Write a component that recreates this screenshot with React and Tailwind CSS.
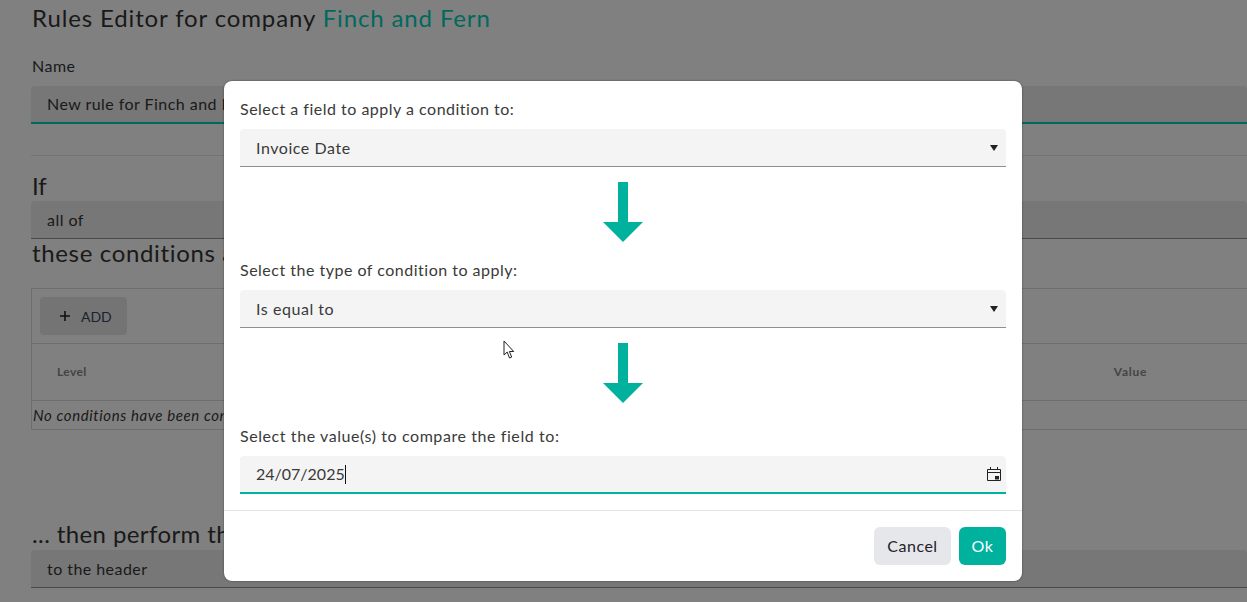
const font = '"Lato","Noto Sans",sans-serif';

function Arrow() {
  return (
    <div className="flex justify-center h-[60px]">
      <svg width="40" height="60" viewBox="0 0 40 60">
        <path d="M15 0h10v40h15L20 60 0 40h15z" fill="#00b19d" />
      </svg>
    </div>
  );
}

function ModalSelect({ label }) {
  return (
    <div className="h-[38px] bg-[#f4f4f4] rounded-t-[4px] border-b border-[#8f8f8f] flex items-center justify-between pl-4 pr-[8px] text-[16px] text-[#3a3a3a]">
      <span className="tracking-[0.55px]">{label}</span>
      <svg width="8" height="6" viewBox="0 0 8 6"><path d="M0 0h8L4 6z" fill="#222" /></svg>
    </div>
  );
}

function Field({ label, className }) {
  return (
    <div className={`flex items-center bg-[#777777] rounded-t-[4px] pl-4 text-[16px] text-[#191919] tracking-[0.45px] ${className}`}>
      {label}
    </div>
  );
}

export default function App() {
  return (
    <div className="relative w-[1247px] h-[602px] overflow-hidden bg-[#808080] text-[#191919]" style={{ fontFamily: font }}>
      <div className="pl-[31px]">
        <h1 className="pl-px text-[24px] leading-[35px] tracking-[0.87px] text-[#191919]">
          Rules Editor for company <span className="text-[#00695e]">Finch and Fern</span>
        </h1>
        <div className="pl-px mt-[19px] text-[16px] leading-[24px] tracking-[0.5px]">Name</div>
        <Field label="New rule for Finch and Fern" className="mt-[8px] h-[38px] border-b-2 border-[#00695e]" />
        <div className="mt-[31px] border-t border-[#747474]" />
        <div className="pl-px mt-[15px] text-[24px] leading-[30px]">If</div>
        <Field label="all of" className="h-[38px] border-b border-[#4a4a4a]" />
        <div className="pl-px text-[24px] leading-[28px] tracking-[0.65px]">these conditions are met</div>
        <div className="mt-[21px] border-y border-l border-[#6e6e6e]">
          <div className="h-[54px] px-[8px] flex items-center">
            <div className="w-[87px] h-[38px] bg-[#747474] rounded-[4px] flex items-center pl-[19px] gap-[10px] text-[14px] text-[#1a2230]">
              <svg width="12" height="12" viewBox="0 0 12 12"><path d="M6 1v10M1 6h10" stroke="#111" strokeWidth="1.6" /></svg>
              ADD
            </div>
          </div>
          <div className="h-[58px] border-y border-[#6e6e6e] flex items-center justify-between pl-[25px] pr-[100px] text-[12px] font-bold text-[#444444]">
            <span className="tracking-[0.4px]">Level</span>
            <span className="tracking-[0.7px]">Value</span>
          </div>
          <div className="h-[28px] flex items-center pl-[1px] text-[15px] italic tracking-[0.6px]">No conditions have been configured</div>
        </div>
        <div className="pl-px mt-[88px] text-[24px] leading-[32px] tracking-[0.4px]">... then perform these actions</div>
        <Field label="to the header" className="h-[38px] border-b border-[#4a4a4a]" />
      </div>

      <div className="absolute left-[224px] top-[81px] w-[798px] h-[500px] bg-white rounded-[8px] flex flex-col shadow-[0_0_2px_rgba(0,0,0,0.5)]">
        <div className="px-4 pt-[16px] flex-1 text-[#3a3a3a]">
          <div className="text-[16px] leading-[24px] mb-[8px] tracking-[0.5px]">Select a field to apply a condition to:</div>
          <ModalSelect label="Invoice Date" />
          <div className="h-[15px]" />
          <Arrow />
          <div className="h-[16px]" />
          <div className="text-[16px] leading-[24px] mb-[8px] tracking-[0.5px]">Select the type of condition to apply:</div>
          <ModalSelect label="Is equal to" />
          <div className="h-[15px]" />
          <Arrow />
          <div className="h-[21px]" />
          <div className="text-[16px] leading-[24px] mb-[8px] tracking-[0.58px]">Select the value(s) to compare the field to:</div>
          <div className="h-[38px] bg-[#f4f4f4] rounded-t-[4px] border-b-2 border-[#00b19d] flex items-center justify-between pl-4 pr-[4px] text-[16px]">
            <span className="flex items-center">24/07/2025<span className="w-px h-[19px] bg-[#111]" /></span>
            <svg width="16" height="16" viewBox="0 0 16 16" fill="none" className="text-[#222]">
              <path d="M1.5 3.5h13v11h-13zM1.5 6.5h13M4.5 1v3M11.5 1v3" stroke="currentColor" strokeWidth="1" />
              <rect x="9" y="10" width="4" height="3.5" fill="currentColor" />
            </svg>
          </div>
        </div>
        <div className="h-[71px] border-t border-[#e2e2ea] flex items-start justify-end gap-[8px] pt-[16px] pr-[16px]">
          <button className="w-[77px] h-[38px] bg-[#e5e7eb] rounded-[6px] text-[16px] text-[#1f2229] tracking-[0.5px]">Cancel</button>
          <button className="w-[47px] h-[38px] bg-[#00b19d] rounded-[6px] text-[16px] text-white tracking-[0.5px]">Ok</button>
        </div>
      </div>

      <svg className="absolute left-[503px] top-[340px]" width="13" height="20" viewBox="0 0 13 20">
        <path d="M1 1v14l3.2-3 2.3 6 2.2-.9-2.3-5.6h4.3z" fill="#fff" stroke="#222" strokeWidth="1" />
      </svg>
    </div>
  );
}
